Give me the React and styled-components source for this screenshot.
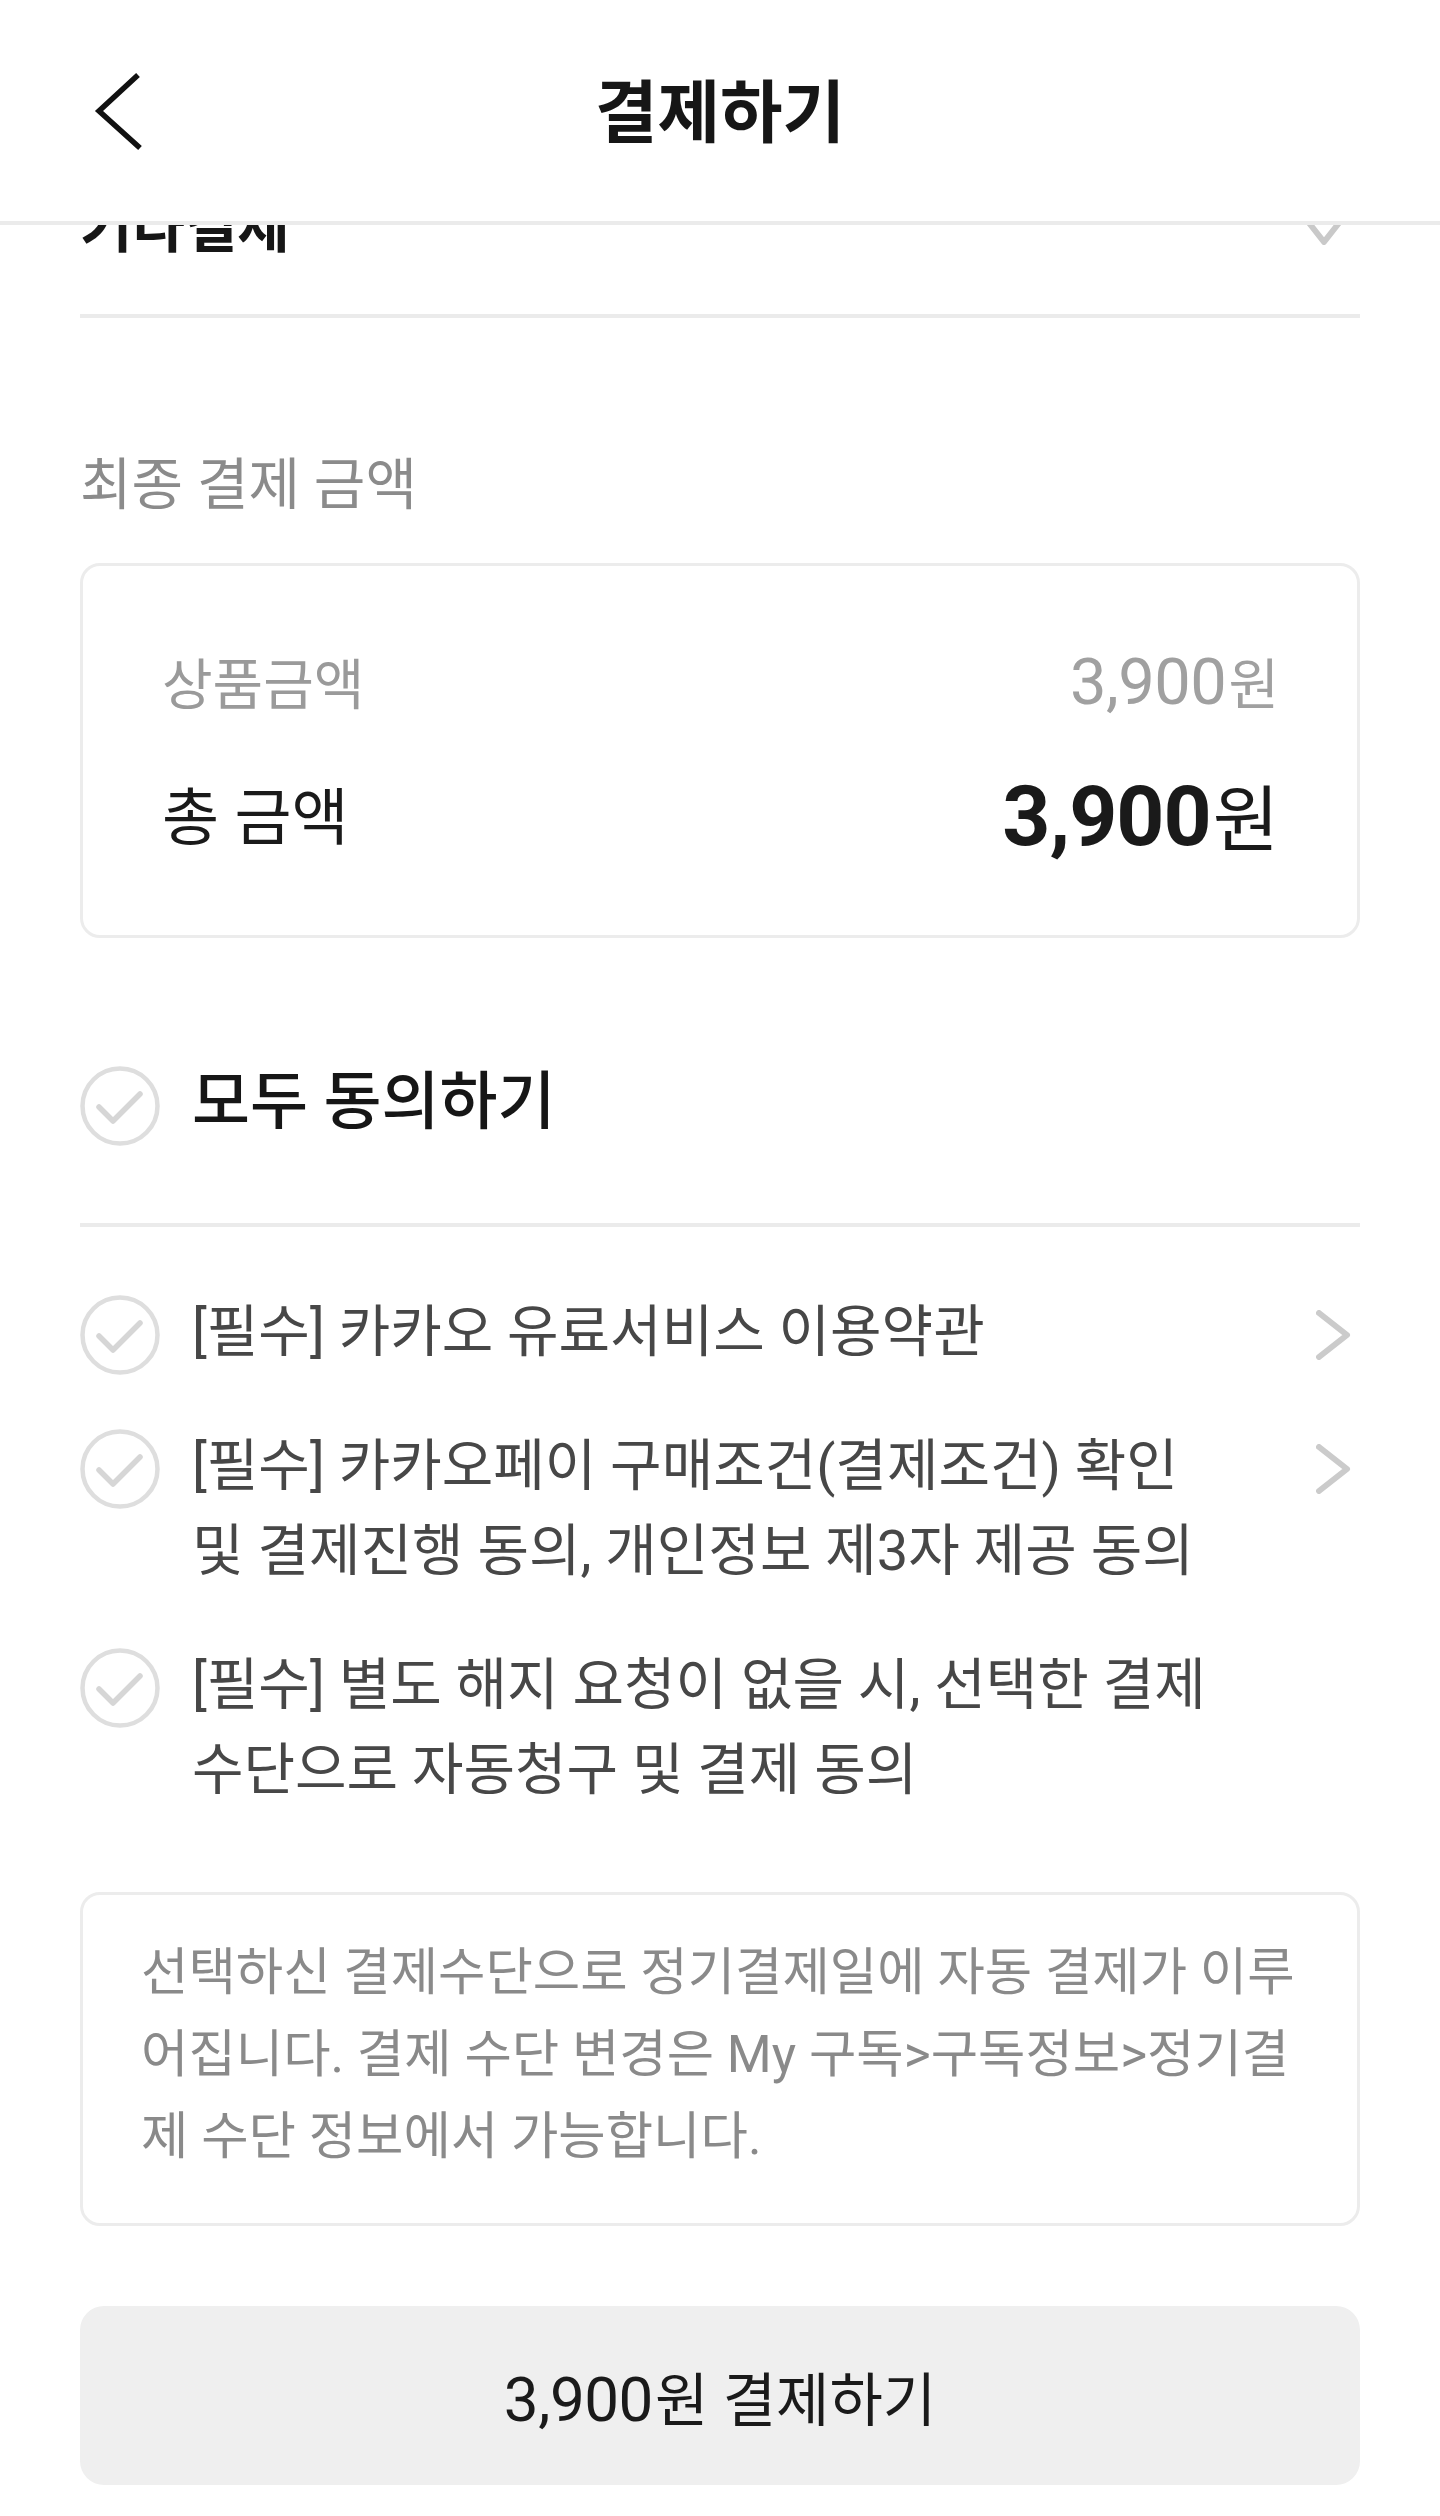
import React from 'react';
import styled, { createGlobalStyle } from 'styled-components';

const GlobalStyle = createGlobalStyle`
  html, body { margin: 0; padding: 0; background: #ffffff; }
  body {
    font-family: 'Roboto', 'Noto Sans CJK KR', sans-serif;
    color: #1a1a1a;
    -webkit-font-smoothing: antialiased;
  }
  *, *::before, *::after { box-sizing: border-box; }
`;

const Page = styled.div`
  width: 1440px;
  min-height: 2516px;
  background: #ffffff;
  display: flex;
  flex-direction: column;
`;

const Header = styled.header`
  position: sticky;
  top: 0;
  z-index: 10;
  height: 225px;
  background: #ffffff;
  border-bottom: 4px solid #ebebeb;
  display: grid;
  grid-template-columns: 1fr auto 1fr;
  align-items: center;
  padding: 0 90px;
`;

const BackButton = styled.button`
  justify-self: start;
  display: flex;
  align-items: center;
  padding: 0;
  margin: 0;
  border: none;
  background: transparent;
  cursor: pointer;
`;

const Title = styled.h1`
  margin: 0;
  font-size: 68px;
  font-weight: 700;
  letter-spacing: 0;
  color: #161616;
  line-height: 80px;
  padding-top: 6px;
`;

const Main = styled.main`
  display: flex;
  flex-direction: column;
  padding: 0 80px 31px;
`;

const MethodRow = styled.div`
  margin-top: -32px;
  display: flex;
  justify-content: space-between;
  align-items: center;
  padding-bottom: 51px;
  border-bottom: 4px solid #ebebeb;
`;

const MethodName = styled.span`
  font-size: 57px;
  font-weight: 700;
  line-height: 70px;
  color: #161616;
`;

const SectionLabel = styled.h2`
  margin: 132px 0 0;
  font-size: 56px;
  font-weight: 400;
  line-height: 70px;
  color: #8b8b8b;
`;

const SummaryBox = styled.section`
  margin-top: 43px;
  border: 3px solid #ececec;
  border-radius: 20px;
  padding: 74px 78px 82px 79px;
  display: flex;
  flex-direction: column;
  gap: 53px;
`;

const SummaryRow = styled.div`
  display: flex;
  justify-content: space-between;
  align-items: center;
  height: 80px;
  font-size: ${p => (p.$total ? 62 : 55)}px;
  color: ${p => (p.$total ? '#1a1a1a' : '#9a9a9a')};
`;

const Amount = styled.span`
  display: inline-flex;
  align-items: baseline;
  color: ${p => p.$color || 'inherit'};
`;

const Num = styled.span`
  font-family: 'Roboto', sans-serif;
  font-size: ${p => p.$size}px;
  font-weight: ${p => (p.$bold ? 700 : 400)};
  letter-spacing: ${p => (p.$bold ? '-1px' : '-0.5px')};
`;

const Unit = styled.span`
  font-family: 'Noto Sans CJK KR', sans-serif;
  font-size: ${p => p.$size}px;
  font-weight: 400;
  letter-spacing: 0;
  margin-left: 2px;
`;

const AgreeAllRow = styled.div`
  margin-top: 128px;
  display: flex;
  align-items: center;
  gap: 32px;
  height: 80px;
`;

const AgreeAllText = styled.span`
  font-size: 63px;
  font-weight: 500;
  line-height: 70px;
  color: #161616;
  padding-bottom: 8px;
`;

const Divider = styled.hr`
  margin: 77px 0 0;
  border: none;
  height: 4px;
  background: #ebebeb;
`;

const AgreeList = styled.ul`
  list-style: none;
  margin: 0;
  padding: 63px 0 0;
  display: flex;
  flex-direction: column;
  gap: 49px;
`;

const AgreeItem = styled.li`
  display: flex;
  align-items: flex-start;
  gap: 32px;
`;

const CheckWrap = styled.span`
  flex: none;
  display: flex;
  margin-top: ${p => p.$offset || 0}px;
`;

const AgreeText = styled.span`
  flex: 1;
  font-size: 56px;
  line-height: 85px;
  color: #474747;
  white-space: nowrap;
`;

const ChevronWrap = styled.span`
  flex: none;
  display: flex;
  margin-top: 20px;
`;

const NoticeBox = styled.p`
  margin: 79px 0 0;
  border: 3px solid #ececec;
  border-radius: 20px;
  padding: 37px 58px 45px;
  font-size: 51.5px;
  line-height: 82px;
  color: #8a8a8a;
  white-space: nowrap;
`;

const PayButton = styled.button`
  margin-top: 80px;
  height: 179px;
  width: 100%;
  border: none;
  border-radius: 24px;
  background: #efefef;
  display: flex;
  justify-content: center;
  align-items: center;
  font-family: 'Roboto', 'Noto Sans CJK KR', sans-serif;
  font-size: 58px;
  color: #1a1a1a;
  cursor: pointer;
`;

const BackIcon = () => (
  <svg width="60" height="80" viewBox="0 0 60 80" aria-hidden="true">
    <polyline points="48,4 9,40 50,77" fill="none" stroke="#111" strokeWidth="5.5" strokeLinejoin="miter" />
  </svg>
);

const ChevronDown = () => (
  <svg width="50" height="34" viewBox="0 0 50 34" aria-hidden="true" style={{ marginRight: 11 }}>
    <polyline points="3,3 25,31 47,3" fill="none" stroke="#c9c9c9" strokeWidth="6" strokeLinecap="round" strokeLinejoin="round" />
  </svg>
);

const ChevronRight = () => (
  <svg width="44" height="50" viewBox="0 0 44 50" aria-hidden="true">
    <polyline points="3,3 31,25 3,47" fill="none" stroke="#cbcbcb" strokeWidth="6" strokeLinecap="round" strokeLinejoin="round" />
  </svg>
);

const CheckCircle = () => (
  <svg width="80" height="80" viewBox="0 0 80 80" aria-hidden="true">
    <circle cx="40" cy="40" r="37.5" fill="none" stroke="#dedede" strokeWidth="4.5" />
    <polyline points="19,41 33,55 60,28" fill="none" stroke="#d6d6d6" strokeWidth="5.5" strokeLinecap="round" strokeLinejoin="round" />
  </svg>
);

const terms = [
  { lines: ['[필수] 카카오 유료서비스 이용약관'], link: true },
  { lines: ['[필수] 카카오페이 구매조건(결제조건) 확인', '및 결제진행 동의, 개인정보 제3자 제공 동의'], link: true },
  { lines: ['[필수] 별도 해지 요청이 없을 시, 선택한 결제', '수단으로 자동청구 및 결제 동의'], link: false },
];

const noticeLines = [
  '선택하신 결제수단으로 정기결제일에 자동 결제가 이루',
  '어집니다. 결제 수단 변경은 My 구독>구독정보>정기결',
  '제 수단 정보에서 가능합니다.',
];

const withBreaks = lines =>
  lines.map((l, i) => (
    <React.Fragment key={i}>
      {i > 0 && <br />}
      {l}
    </React.Fragment>
  ));

export default function App() {
  return (
    <Page>
      <GlobalStyle />
      <Header>
        <BackButton aria-label="뒤로">
          <BackIcon />
        </BackButton>
        <Title>결제하기</Title>
        <span />
      </Header>
      <Main>
        <MethodRow>
          <MethodName>기타결제</MethodName>
          <ChevronDown />
        </MethodRow>

        <SectionLabel>최종 결제 금액</SectionLabel>
        <SummaryBox>
          <SummaryRow>
            <span>상품금액</span>
            <Amount $color="#a0a0a0">
              <Num $size={65}>3,900</Num>
              <Unit $size={55}>원</Unit>
            </Amount>
          </SummaryRow>
          <SummaryRow $total>
            <span>총 금액</span>
            <Amount>
              <Num $size={84} $bold>3,900</Num>
              <Unit $size={72}>원</Unit>
            </Amount>
          </SummaryRow>
        </SummaryBox>

        <AgreeAllRow>
          <CheckCircle />
          <AgreeAllText>모두 동의하기</AgreeAllText>
        </AgreeAllRow>
        <Divider />

        <AgreeList>
          {terms.map((t, i) => (
            <AgreeItem key={i}>
              <CheckWrap $offset={5}>
                <CheckCircle />
              </CheckWrap>
              <AgreeText>{withBreaks(t.lines)}</AgreeText>
              {t.link && (
                <ChevronWrap>
                  <ChevronRight />
                </ChevronWrap>
              )}
            </AgreeItem>
          ))}
        </AgreeList>

        <NoticeBox>{withBreaks(noticeLines)}</NoticeBox>

        <PayButton>
          <Amount>
            <Num $size={62}>3,900</Num>
            <Unit $size={58}>원</Unit>
          </Amount>
          &nbsp;결제하기
        </PayButton>
      </Main>
    </Page>
  );
}
